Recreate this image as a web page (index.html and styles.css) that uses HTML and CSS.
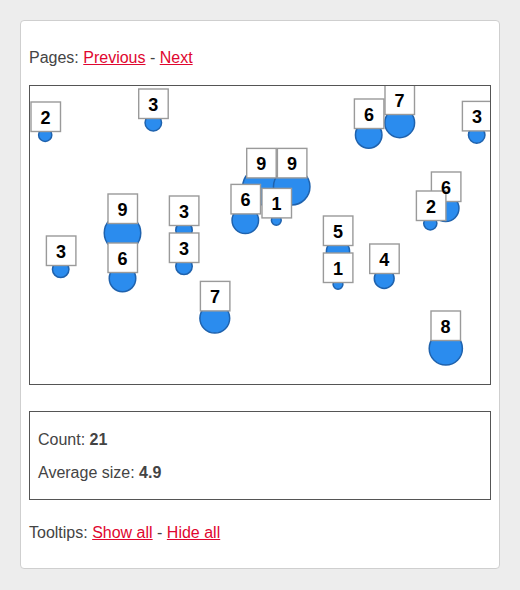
FILE: index.html
```html
<!DOCTYPE html>
<html lang="en">
<head>
<meta charset="utf-8">
<title>Bubbles</title>
<link rel="stylesheet" href="styles.css">
</head>
<body>
<div class="card">
  <p class="line pages">Pages: <a href="#">Previous</a> - <a href="#">Next</a></p>
  <div class="chart">
    <svg class="plot" width="460" height="298" viewBox="0 0 460 298">
      <g class="dots">
        <circle cx="15.2" cy="48.9" r="6.6"/>
        <circle cx="123.3" cy="36.7" r="8.25"/>
        <circle cx="338.7" cy="49" r="13.25"/>
        <circle cx="369.7" cy="36.8" r="14.9"/>
        <circle cx="446.7" cy="49" r="8.25"/>
        <circle cx="231" cy="100.5" r="18.25"/>
        <circle cx="261.7" cy="100.7" r="18.25"/>
        <circle cx="215.3" cy="134.3" r="13.25"/>
        <circle cx="246.3" cy="134.3" r="4.9"/>
        <circle cx="415.7" cy="122.3" r="13.25"/>
        <circle cx="400.3" cy="137.3" r="6.6"/>
        <circle cx="92.5" cy="146.9" r="18.25"/>
        <circle cx="154" cy="144.2" r="8.25"/>
        <circle cx="30.7" cy="183.3" r="8.25"/>
        <circle cx="92.5" cy="192.5" r="13.25"/>
        <circle cx="154" cy="180.3" r="8.25"/>
        <circle cx="184.8" cy="232.2" r="14.9"/>
        <circle cx="308" cy="165.5" r="11.6"/>
        <circle cx="308" cy="198.3" r="4.9"/>
        <circle cx="354.2" cy="192.5" r="9.9"/>
        <circle cx="415.8" cy="262.5" r="16.6"/>
      </g>
      <g class="boxes">
        <rect x="1" y="16" width="29.5" height="29.5"/>
        <rect x="108.7" y="3" width="29.5" height="29.5"/>
        <rect x="324.4" y="13" width="29.5" height="29.5"/>
        <rect x="355" y="-1" width="29.5" height="29.5"/>
        <rect x="432.4" y="15.4" width="29.5" height="29.5"/>
        <rect x="216.7" y="62.4" width="29.5" height="29.5"/>
        <rect x="247.4" y="62.4" width="29.5" height="29.5"/>
        <rect x="201" y="98.4" width="29.5" height="29.5"/>
        <rect x="232" y="102.4" width="29.5" height="29.5"/>
        <rect x="401.4" y="86" width="29.5" height="29.5"/>
        <rect x="386.4" y="105" width="29.5" height="29.5"/>
        <rect x="78" y="108" width="29.5" height="29.5"/>
        <rect x="139.4" y="110" width="29.5" height="29.5"/>
        <rect x="16.4" y="150" width="29.5" height="29.5"/>
        <rect x="78" y="157" width="29.5" height="29.5"/>
        <rect x="139.4" y="147" width="29.5" height="29.5"/>
        <rect x="170.4" y="195.4" width="29.5" height="29.5"/>
        <rect x="293.4" y="130" width="29.5" height="29.5"/>
        <rect x="293.4" y="167" width="29.5" height="29.5"/>
        <rect x="339.7" y="158" width="29.5" height="29.5"/>
        <rect x="401" y="225" width="29.5" height="29.5"/>
      </g>
      <g class="labels">
        <text x="15.5" y="37.8">2</text>
        <text x="123.2" y="24.8">3</text>
        <text x="338.9" y="34.8">6</text>
        <text x="369.5" y="21.3">7</text>
        <text x="446.9" y="37.2">3</text>
        <text x="231.2" y="84.2">9</text>
        <text x="261.9" y="84.2">9</text>
        <text x="215.5" y="120.2">6</text>
        <text x="246.5" y="124.2">1</text>
        <text x="415.9" y="107.8">6</text>
        <text x="400.9" y="126.8">2</text>
        <text x="92.5" y="129.8">9</text>
        <text x="153.9" y="131.8">3</text>
        <text x="30.9" y="171.8">3</text>
        <text x="92.5" y="178.8">6</text>
        <text x="153.9" y="168.8">3</text>
        <text x="184.9" y="217.2">7</text>
        <text x="307.9" y="151.8">5</text>
        <text x="307.9" y="188.8">1</text>
        <text x="354.2" y="179.8">4</text>
        <text x="415.5" y="246.8">8</text>
      </g>
    </svg>
  </div>
  <div class="stats">
    <p class="stat">Count: <strong>21</strong></p>
    <p class="stat">Average size: <strong>4.9</strong></p>
  </div>
  <p class="line tips">Tooltips: <a href="#">Show all</a> - <a href="#">Hide all</a></p>
</div>
</body>
</html>
```

FILE: styles.css
```css
html, body {
  margin: 0;
  padding: 0;
}

body {
  background: #ededed;
  padding: 20px;
  font-family: "Liberation Sans", Arial, sans-serif;
  font-size: 16px;
  color: #444;
}

.card {
  background: #fff;
  border: 1px solid #cfcfcf;
  border-radius: 4px;
  padding: 28px 8px 26px;
}

.line {
  margin: 0;
  line-height: 18px;
}

.pages {
  margin-bottom: 18px;
}

.tips {
  margin-top: 24px;
}

a {
  color: #e0062f;
  text-decoration: underline;
}

.chart {
  border: 1px solid #555;
  height: 298px;
}

.plot {
  display: block;
  overflow: hidden;
}

.dots circle {
  fill: #2b8cee;
  stroke: #1f62ad;
  stroke-width: 1.5;
}

.boxes rect {
  fill: #fff;
  stroke: #9a9a9a;
  stroke-width: 1.4;
}

.labels text {
  font-family: "Liberation Sans", Arial, sans-serif;
  font-weight: bold;
  font-size: 18px;
  fill: #000;
  text-anchor: middle;
}

.stats {
  margin-top: 26px;
  border: 1px solid #555;
  padding: 19px 8px 17px;
  display: flex;
  flex-direction: column;
  gap: 15px;
}

.stat {
  margin: 0;
  line-height: 18px;
}

.stat strong {
  font-weight: bold;
}
```
